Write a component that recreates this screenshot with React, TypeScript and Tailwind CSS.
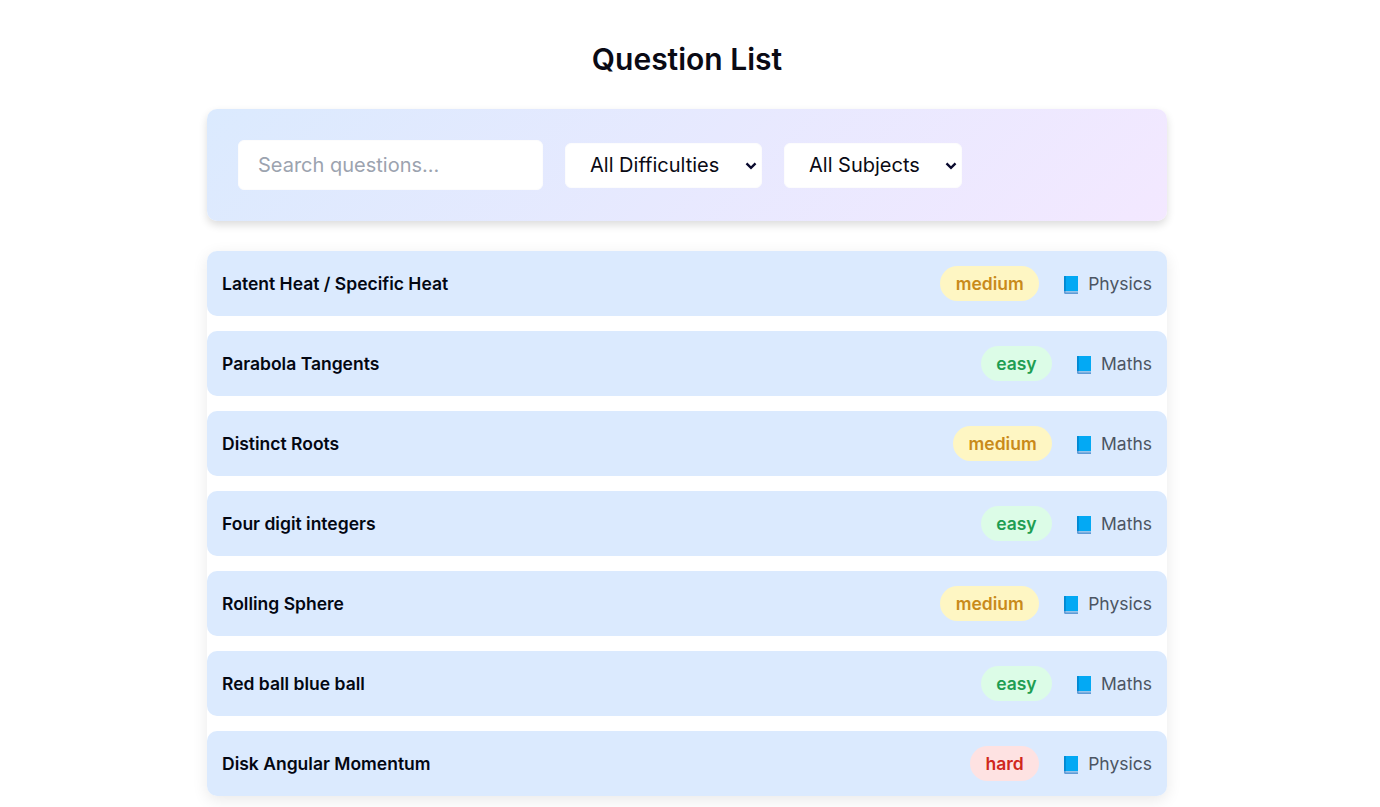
const rows = [
  { t: "Latent Heat / Specific Heat", d: "medium", s: "Physics" },
  { t: "Parabola Tangents", d: "easy", s: "Maths" },
  { t: "Distinct Roots", d: "medium", s: "Maths" },
  { t: "Four digit integers", d: "easy", s: "Maths" },
  { t: "Rolling Sphere", d: "medium", s: "Physics" },
  { t: "Red ball blue ball", d: "easy", s: "Maths" },
  { t: "Disk Angular Momentum", d: "hard", s: "Physics" },
];

const badge: Record<string, string> = {
  easy: "bg-[#dcfce7] text-[#1f9e52]",
  medium: "bg-[#fef6c3] text-[#c98a1a]",
  hard: "bg-[#fee2e2] text-[#d0281c]",
};

function Book() {
  return (
    <svg width="18" height="18" viewBox="0 0 18 18" className="shrink-0" aria-hidden="true">
      <path d="M1 1 C1 0.4 1.4 0 2 0 H15 V15 H1 Z" fill="#03a9f4" />
      <path d="M1 1 C1 0.4 1.4 0 2 0 H2.8 V15 H1 Z" fill="#0288d1" />
      <path d="M1 15 H15 V18 H2.2 C1.5 18 1 17.5 1 16.8 Z" fill="#5f9bd6" />
      <path d="M2.6 15.2 H15 V16.4 H2.6 Z" fill="#a9cfee" />
    </svg>
  );
}

function Select({ label, width }: { label: string; width: string }) {
  return (
    <div className={`relative h-[45px] ${width}`}>
      <select className="h-full w-full appearance-none rounded-[6px] border border-[#fcfcfd] bg-white pl-[24px] pr-[30px] text-[20px] text-[#0a0a14] outline-none">
        <option>{label}</option>
      </select>
      <svg width="12" height="8" viewBox="0 0 12 8" className="pointer-events-none absolute right-[5px] top-[19px]" aria-hidden="true">
        <path d="M1.5 1.4 L6 5.8 L10.5 1.4" fill="none" stroke="#0a0a2e" strokeWidth="2.4" />
      </svg>
    </div>
  );
}

export default function App() {
  return (
    <div className="min-h-screen w-[1374px] bg-white font-['Inter',sans-serif] text-[#030712]">
      <div className="mx-auto w-[960px] pt-[40px]">
        <h1 className="mb-[31px] text-center text-[30px] leading-[38px] font-semibold text-[#0a0a14]">Question List</h1>
        <div className="flex items-center gap-[22px] rounded-[10px] bg-[linear-gradient(135deg,#dbeafe,#f3e8ff)] p-[31px] shadow-[0_4px_8px_rgba(0,0,0,0.14)]">
          <input
            placeholder="Search questions..."
            className="h-[50px] w-[305px] rounded-[6px] border border-[#fcfcfd] bg-white px-[19px] text-[20px] text-[#111827] outline-none placeholder:text-[#9ca3af]"
          />
          <Select label="All Difficulties" width="w-[197px]" />
          <Select label="All Subjects" width="w-[178px]" />
        </div>
        <div className="mt-[30px] flex flex-col gap-[15px] rounded-[10px] bg-white shadow-[0_4px_16px_rgba(0,0,0,0.09)]">
          {rows.map((r) => (
            <div key={r.t} className="flex h-[65px] items-center justify-between rounded-[10px] bg-[#dbeafe] px-[15px]">
              <span className="pt-[2px] text-[17.5px] font-semibold">{r.t}</span>
              <div className="flex items-center gap-[24px]">
                <span className={`flex h-[35px] items-center rounded-full px-[15.4px] pt-[2px] text-[17.5px] font-semibold ${badge[r.d]}`}>{r.d}</span>
                <span className="flex items-center gap-[7px] pt-[2px] text-[17.5px] text-[#4b5563]">
                  <Book />
                  {r.s}
                </span>
              </div>
            </div>
          ))}
        </div>
      </div>
    </div>
  );
}
